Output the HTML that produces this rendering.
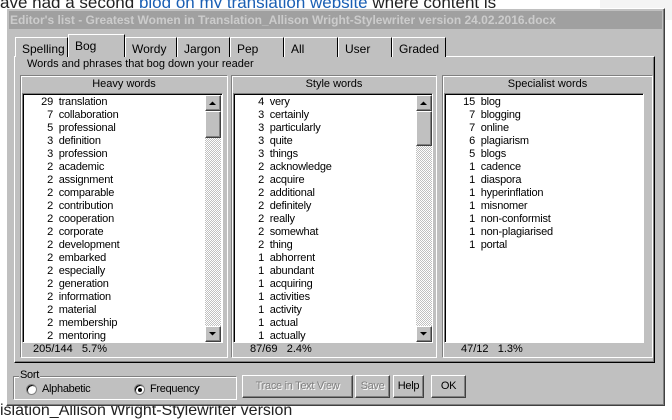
<!DOCTYPE html>
<html><head><style>
*{margin:0;padding:0;box-sizing:border-box}
body{width:672px;height:416px;overflow:hidden;background:#fff;position:relative;font-family:"Liberation Sans",sans-serif;font-size:11px;color:#000}
.abs{position:absolute}
.raised{background:#c0c0c0;border:1px solid;border-color:#fff #404040 #404040 #fff;box-shadow:inset -1px -1px 0 #808080}
.group{position:absolute;border:1px solid;border-color:#808080 #fff #fff #808080;box-shadow:inset 1px 1px 0 #fff,1px 1px 0 #808080 inset}
.list{position:absolute;background:#fff;border:1px solid;border-color:#808080 #fff #fff #808080;box-shadow:inset 1px 1px 0 #000}
.row{position:absolute;height:13px;line-height:13px;white-space:nowrap;letter-spacing:-0.2px}
.n{display:inline-block;text-align:right}
.sb{position:absolute;width:16px;background:repeating-conic-gradient(#c0c0c0 0 25%,#fff 0 50%) 0 0/2px 2px}
.arr{position:absolute;left:0;width:16px;height:16px}
.tab{position:absolute;top:37px;height:20px;background:#c0c0c0;border:1px solid;border-bottom:none;border-color:#fff #000 #000 #fff;padding:4px 0 0 6px;font-size:12px}
.btn{position:absolute;top:375px;height:23px;text-align:center;line-height:21px;font-size:11px;letter-spacing:-0.3px;white-space:nowrap;overflow:hidden}
</style></head><body>
<div class="abs" style="left:0;top:-7px;font-size:17px;color:#222;font-family:'Liberation Sans',sans-serif">ave had a second <span style="color:#1a5fb4;text-decoration:underline">blog on my translation website</span> where content is</div>
<div class="abs" style="left:0;top:402px;font-size:16px;color:#222">islation_Allison Wright-Stylewriter version</div>
<div class="abs" style="left:600px;top:0;width:72px;height:20px;background:#f4f4f4"></div>

<div class="abs raised" style="left:6px;top:8px;width:659px;height:398px"></div>
<div class="abs" style="left:9px;top:11px;width:653px;height:18px;background:#a0a0a0;color:#cccccc;font-weight:bold;font-size:12px;line-height:18px;padding-left:1px">Editor's list - Greatest Women in Translation_Allison Wright-Stylewriter version 24.02.2016.docx</div>

<div class="abs" style="left:14px;top:56px;width:641px;height:307px;border:1px solid;border-color:#fff #000 #000 #fff;box-shadow:inset -1px -1px 0 #808080"></div>
<div class="tab" style="left:15px;width:53px">Spelling</div>
<div class="tab" style="left:68px;width:57px;top:34px;height:23px;padding-top:4px;z-index:2;border-bottom:none">Bog</div>
<div class="tab" style="left:125px;width:52px">Wordy</div>
<div class="tab" style="left:177px;width:53px">Jargon</div>
<div class="tab" style="left:230px;width:54px">Pep</div>
<div class="tab" style="left:284px;width:54px">All</div>
<div class="tab" style="left:338px;width:54px">User</div>
<div class="tab" style="left:392px;width:54px">Graded</div>
<div class="abs" style="left:69px;top:55px;width:55px;height:3px;background:#c0c0c0;z-index:3"></div>
<div class="abs" style="left:27px;top:58px;font-size:11px">Words and phrases that bog down your reader</div>

<div class="group" style="left:20px;top:75px;width:208px;height:283px"></div>
<div class="group" style="left:231px;top:75px;width:206px;height:283px"></div>
<div class="group" style="left:442px;top:75px;width:211px;height:283px"></div>
<div class="abs" style="left:20px;top:78px;width:208px;text-align:center">Heavy words</div>
<div class="abs" style="left:231px;top:78px;width:206px;text-align:center">Style words</div>
<div class="abs" style="left:442px;top:78px;width:211px;text-align:center">Specialist words</div>

<div class="list" style="left:22px;top:93px;width:201px;height:250px;overflow:hidden" id="l1"></div>
<div class="list" style="left:233px;top:93px;width:200px;height:250px;overflow:hidden" id="l2"></div>
<div class="list" style="left:444px;top:93px;width:200px;height:250px;overflow:hidden" id="l3"></div>

<div class="abs" style="left:33px;top:343px">205/144&nbsp;&nbsp; 5.7%</div>
<div class="abs" style="left:250px;top:343px">87/69&nbsp;&nbsp; 2.4%</div>
<div class="abs" style="left:461px;top:343px">47/12&nbsp;&nbsp; 1.3%</div>

<div class="group" style="left:13px;top:376px;width:224px;height:24px"></div>
<div class="abs" style="left:19px;top:369px;background:#c0c0c0;padding:0 1px;letter-spacing:-0.3px">Sort</div>
<div class="abs" style="left:26px;top:384px;width:11px;height:11px;border-radius:50%;background:#fff;border:1px solid #808080;box-shadow:inset 1px 1px 0 #000"></div>
<div class="abs" style="left:42px;top:383px;letter-spacing:-0.3px">Alphabetic</div>
<div class="abs" style="left:134px;top:384px;width:11px;height:11px;border-radius:50%;background:#fff;border:1px solid #808080;box-shadow:inset 1px 1px 0 #000"></div>
<div class="abs" style="left:138px;top:388px;width:4px;height:4px;border-radius:50%;background:#000"></div>
<div class="abs" style="left:150px;top:383px;letter-spacing:-0.3px">Frequency</div>

<div class="btn raised" style="left:242px;width:111px;color:#808080;text-shadow:1px 1px 0 #fff">Trace in Text View</div>
<div class="btn raised" style="left:355px;width:35px;color:#808080;text-shadow:1px 1px 0 #fff">Save</div>
<div class="btn raised" style="left:393px;width:31px">Help</div>
<div class="btn raised" style="left:431px;width:35px">OK</div>

<script>
const d=[
[[29,"translation"],[7,"collaboration"],[5,"professional"],[3,"definition"],[3,"profession"],[2,"academic"],[2,"assignment"],[2,"comparable"],[2,"contribution"],[2,"cooperation"],[2,"corporate"],[2,"development"],[2,"embarked"],[2,"especially"],[2,"generation"],[2,"information"],[2,"material"],[2,"membership"],[2,"mentoring"]],
[[4,"very"],[3,"certainly"],[3,"particularly"],[3,"quite"],[3,"things"],[2,"acknowledge"],[2,"acquire"],[2,"additional"],[2,"definitely"],[2,"really"],[2,"somewhat"],[2,"thing"],[1,"abhorrent"],[1,"abundant"],[1,"acquiring"],[1,"activities"],[1,"activity"],[1,"actual"],[1,"actually"]],
[[15,"blog"],[7,"blogging"],[7,"online"],[6,"plagiarism"],[5,"blogs"],[1,"cadence"],[1,"diaspora"],[1,"hyperinflation"],[1,"misnomer"],[1,"non-conformist"],[1,"non-plagiarised"],[1,"portal"]]];
const nw=[30,30,30];
d.forEach((rows,i)=>{const el=document.getElementById('l'+(i+1));let h='';
rows.forEach((r,j)=>{h+=`<div class="row" style="left:0;top:${2+j*13}px"><span class="n" style="width:${nw[i]}px">${r[0]}</span>&nbsp; ${r[1]}</div>`});
if(i<2){h+=`<div class="sb" style="left:182px;top:1px;height:247px"></div>
<div class="arr raised" style="left:182px;top:1px"><svg width="14" height="14" style="position:absolute;left:0;top:0"><path d="M3 9h7L6.5 5.5z" fill="#000"/></svg></div>
<div class="arr raised" style="left:182px;top:17px;height:${i==0?27:35}px"></div>
<div class="arr raised" style="left:182px;top:232px"><svg width="14" height="14" style="position:absolute;left:0;top:0"><path d="M3 5h7L6.5 8.5z" fill="#000"/></svg></div>`}
el.innerHTML=h;});
</script>
</body></html>
